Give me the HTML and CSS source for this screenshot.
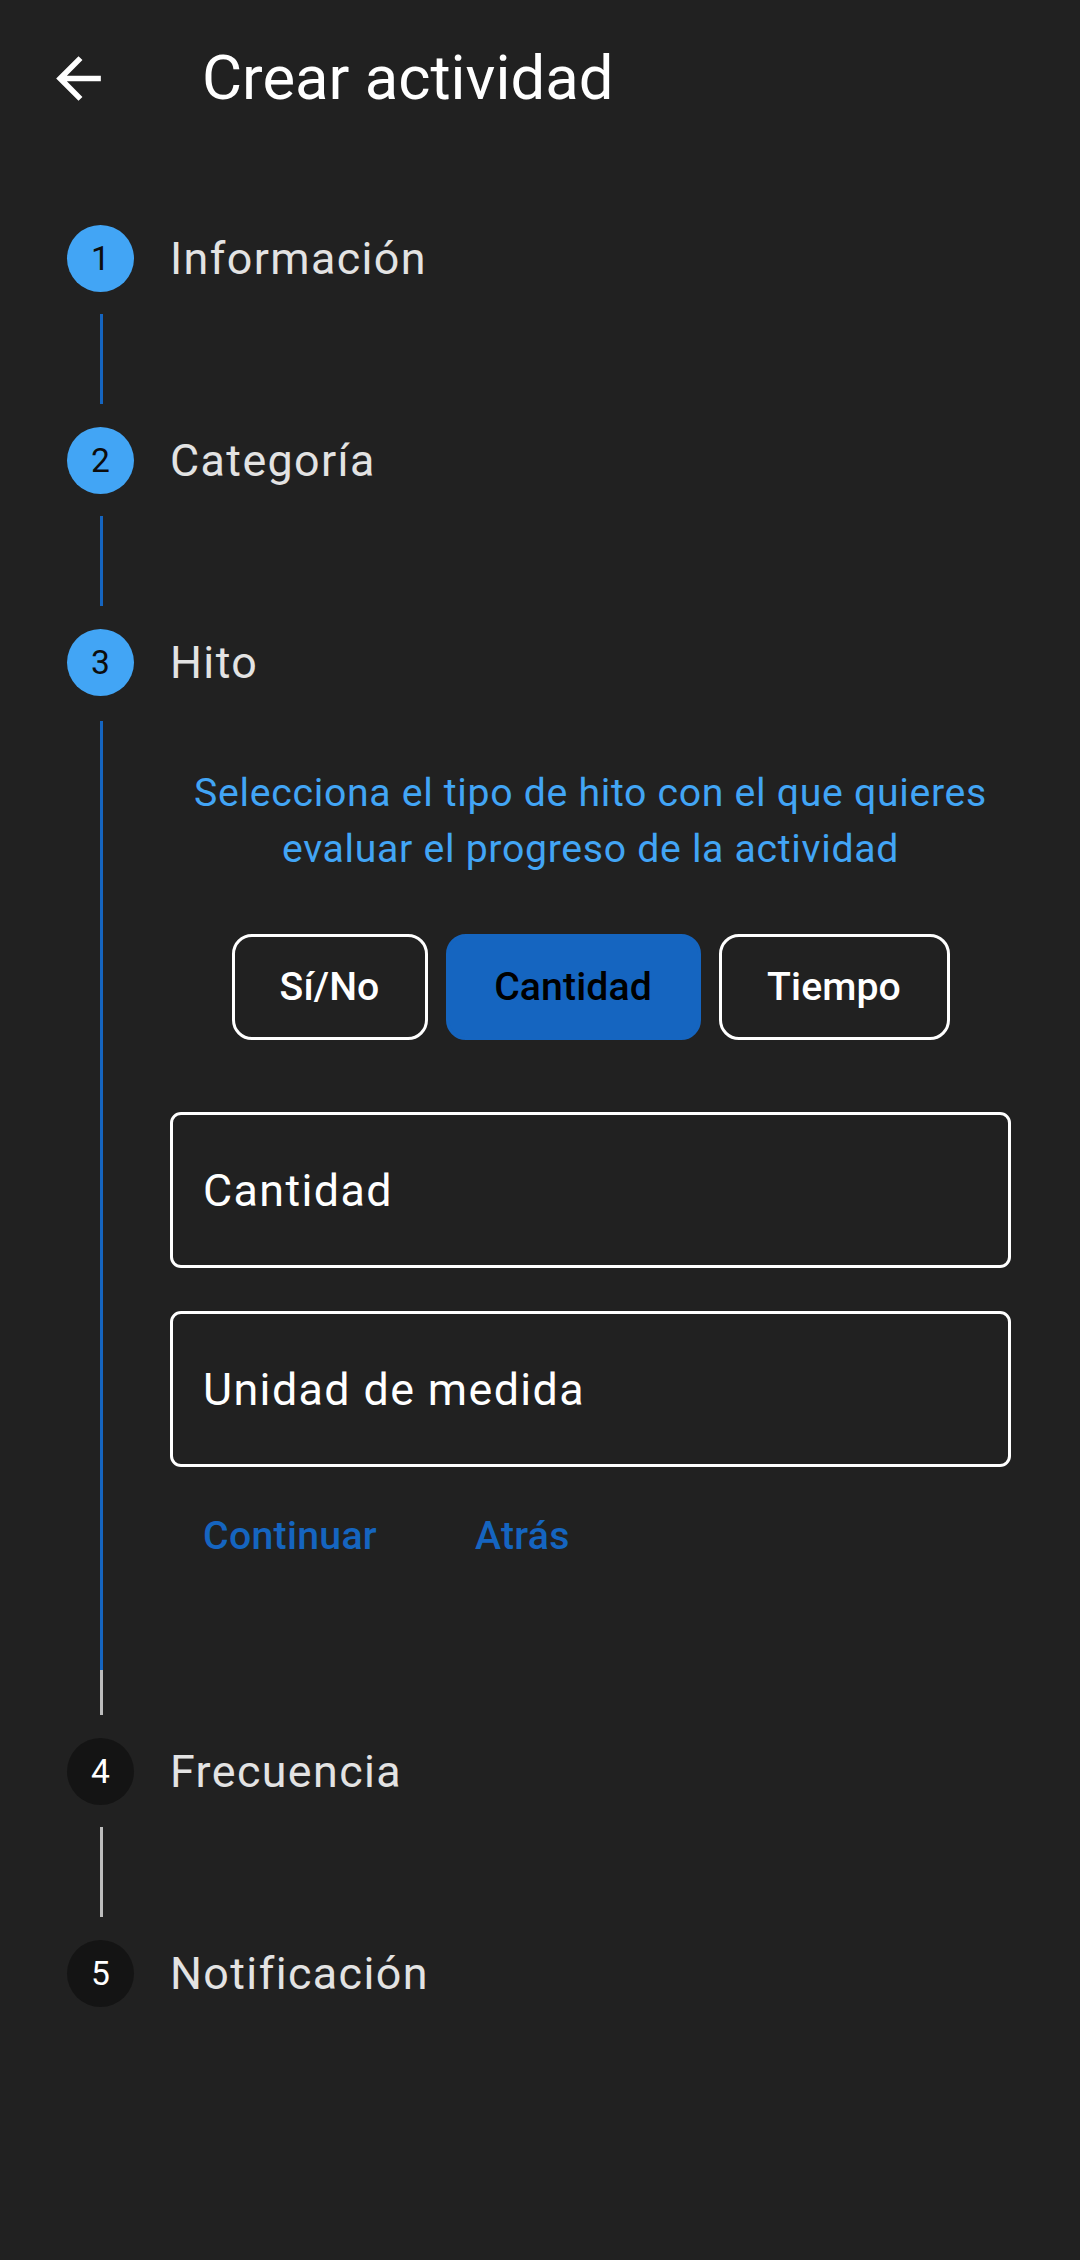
FILE: index.html
```html
<!DOCTYPE html>
<html lang="es">
<head>
<meta charset="utf-8">
<title>Crear actividad</title>
<link rel="stylesheet" href="styles.css">
</head>
<body>
<div class="screen">
  <header class="appbar">
    <div class="back">
      <svg viewBox="0 0 24 24" width="67" height="67"><path d="M20 11H7.83l5.59-5.59L12 4l-8 8 8 8 1.41-1.41L7.83 13H20v-2z" fill="#ffffff"/></svg>
    </div>
    <h1 class="title">Crear actividad</h1>
  </header>

  <main class="stepper">
    <section class="step">
      <div class="step-head"><span class="dot active">1</span><span class="label">Información</span></div>
      <div class="connector"><span class="line blue"></span></div>
    </section>

    <section class="step">
      <div class="step-head"><span class="dot active">2</span><span class="label">Categoría</span></div>
      <div class="connector"><span class="line blue"></span></div>
    </section>

    <section class="step">
      <div class="step-head"><span class="dot active">3</span><span class="label">Hito</span></div>
      <div class="step-body">
        <div class="rail"><span class="line blue grow"></span><span class="line grey tail"></span></div>
        <div class="content">
          <p class="hint">Selecciona el tipo de hito con el que quieres evaluar el progreso de la actividad</p>
          <div class="toggles">
            <button class="toggle t-sino">Sí/No</button>
            <button class="toggle t-cantidad selected">Cantidad</button>
            <button class="toggle t-tiempo">Tiempo</button>
          </div>
          <div class="field">Cantidad</div>
          <div class="field">Unidad de medida</div>
          <div class="controls">
            <span class="text-btn">Continuar</span>
            <span class="text-btn">Atrás</span>
          </div>
        </div>
      </div>
    </section>

    <section class="step">
      <div class="step-head"><span class="dot">4</span><span class="label">Frecuencia</span></div>
      <div class="connector"><span class="line grey"></span></div>
    </section>

    <section class="step">
      <div class="step-head"><span class="dot">5</span><span class="label">Notificación</span></div>
    </section>
  </main>
</div>
</body>
</html>
```

FILE: styles.css
```css
html, body {
  margin: 0;
  padding: 0;
  background: #212121;
}

.screen {
  width: 1080px;
  min-height: 2260px;
  background: #212121;
  font-family: Roboto, "Noto Sans", "Liberation Sans", sans-serif;
  color: #ffffff;
}

.appbar {
  height: 157px;
  display: flex;
  align-items: center;
}

.back {
  width: 157px;
  height: 157px;
  display: flex;
  align-items: center;
  justify-content: center;
}

.back svg {
  display: block;
}

.title {
  margin: 0 0 0 45px;
  font-size: 61.6px;
  font-weight: 400;
  color: #ffffff;
  line-height: 1;
}

.stepper {
  padding-top: 68px;
}

.step-head {
  height: 67px;
  display: flex;
  align-items: center;
  padding-left: 67px;
  gap: 36px;
}

.dot {
  width: 67px;
  height: 67px;
  border-radius: 50%;
  background: #141414;
  color: #ffffff;
  font-size: 33.6px;
  display: flex;
  align-items: center;
  justify-content: center;
  flex: none;
}

.dot.active {
  background: #42a5f5;
  color: #0d0d0d;
}

.label {
  font-size: 44.8px;
  letter-spacing: 1.4px;
  color: #e3e3e3;
}

.connector {
  padding: 22px 0 23px 100px;
}

.line {
  display: block;
  width: 3px;
  height: 90px;
}

.line.blue {
  background: #1565c0;
}

.line.grey {
  background: #bdbdbd;
}

.step-body {
  display: flex;
}

.rail {
  width: 3px;
  padding: 25px 0 23px 100px;
  display: flex;
  flex-direction: column;
}

.rail .grow {
  height: auto;
  flex: 1;
}

.rail .tail {
  height: 45px;
}

.content {
  margin-left: 67px;
  width: 841px;
  padding: 69px 0 178px;
}

.hint {
  margin: 0;
  text-align: center;
  font-size: 39.2px;
  line-height: 56px;
  letter-spacing: 0.7px;
  color: #42a5f5;
}

.toggles {
  margin-top: 57px;
  display: flex;
  justify-content: center;
  gap: 18px;
}

.toggle {
  height: 106px;
  padding: 0;
  border: 3px solid #ffffff;
  border-radius: 20px;
  background: transparent;
  color: #ffffff;
  font-family: Roboto, "Noto Sans", "Liberation Sans", sans-serif;
  font-size: 39.2px;
  font-weight: 500;
  letter-spacing: 0.1px;
}

.t-sino { width: 196px; }
.t-cantidad { width: 255px; }
.t-tiempo { width: 231px; }

.toggle.selected {
  background: #1565c0;
  border-color: #1565c0;
  color: #000000;
}

.field {
  margin-top: 72px;
  height: 156px;
  box-sizing: border-box;
  border: 3px solid #ffffff;
  border-radius: 11px;
  padding-left: 30px;
  display: flex;
  align-items: center;
  font-size: 44.8px;
  letter-spacing: 1.4px;
  color: #ffffff;
}

.field + .field {
  margin-top: 43px;
}

.controls {
  margin-top: 45px;
  height: 48px;
  display: flex;
  align-items: center;
  padding-left: 33px;
  gap: 98px;
}

.text-btn {
  font-size: 39.2px;
  font-weight: 500;
  letter-spacing: 0.3px;
  color: #1565c0;
}
```
